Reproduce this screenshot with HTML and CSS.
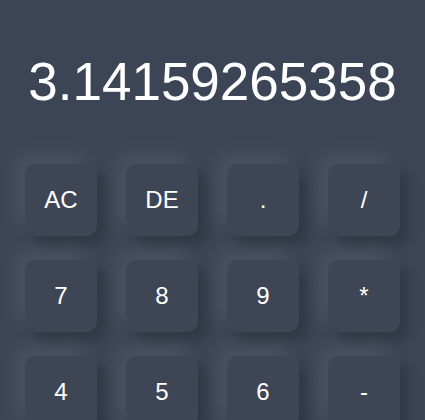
FILE: index.html
```html
<!DOCTYPE html>
<html>
<head>
<meta charset="utf-8">
<link rel="stylesheet" href="styles.css">
</head>
<body>
<div class="calc">
  <div class="display">3.14159265358</div>
  <div class="keys">
    <button class="key">AC</button>
    <button class="key">DE</button>
    <button class="key">.</button>
    <button class="key">/</button>
    <button class="key">7</button>
    <button class="key">8</button>
    <button class="key">9</button>
    <button class="key">*</button>
    <button class="key">4</button>
    <button class="key">5</button>
    <button class="key">6</button>
    <button class="key">-</button>
  </div>
</div>
</body>
</html>
```
FILE: styles.css
```css
html, body {
  margin: 0;
  padding: 0;
  background: #3c4555;
  font-family: "Liberation Sans", Arial, sans-serif;
  color: #ffffff;
  overflow: hidden;
}
.calc {
  padding: 51px 25px 0;
}
.display {
  font-size: 53px;
  line-height: 61px;
  text-align: center;
  margin-bottom: 52px;
}
.keys {
  display: grid;
  grid-template-columns: repeat(4, 72px);
  grid-auto-rows: 72px;
  column-gap: 29px;
  row-gap: 24px;
}
.key {
  border: none;
  border-radius: 10px;
  background: #3e4656;
  color: #ffffff;
  font-family: "Liberation Sans", Arial, sans-serif;
  font-size: 24px;
  padding: 0;
  box-shadow: -10px -10px 20px rgba(255, 255, 255, 0.08),
              8px 8px 12px rgba(0, 0, 0, 0.2);
}
```
